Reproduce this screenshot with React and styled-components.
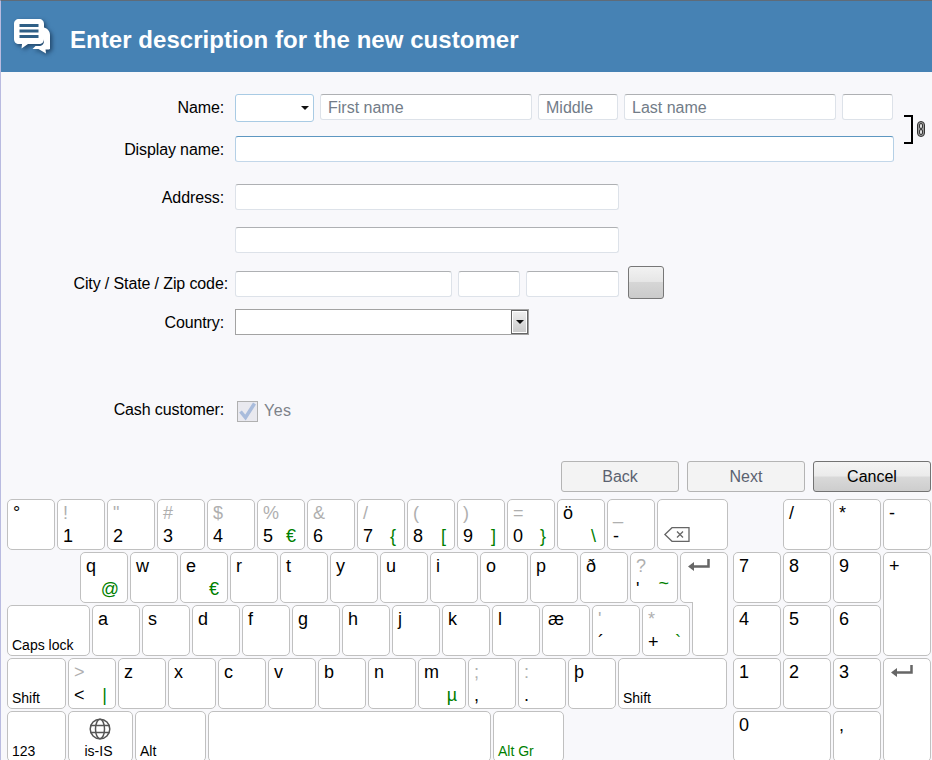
import React from 'react'
import styled, { createGlobalStyle } from 'styled-components'

const GlobalStyle = createGlobalStyle`
  html, body {
    margin: 0;
    padding: 0;
    background: #f8f8fb;
    font-family: "Liberation Sans", Arial, sans-serif;
  }
`

const Page = styled.div`
  width: 932px;
  height: 760px;
  box-sizing: border-box;
  overflow: hidden;
  border-top: 1px solid #5f6b78;
  border-left: 1px solid #b9bbe0;
  background: #f8f8fb;
`
const Header = styled.header`
  height: 71px;
  display: flex;
  align-items: center;
  padding-left: 13px;
  background: #4682b4;
`
const Title = styled.h1`
  margin: 7px 0 0 19px;
  font-size: 24px;
  font-weight: 700;
  letter-spacing: 0.05px;
  color: #fff;
`
const Form = styled.div`
  padding-top: 22px;
`
const NameGroup = styled.div`
  display: flex;
  align-items: center;
`
const NameRows = styled.div`
  width: 893px;
`
const Row = styled.div`
  display: flex;
  align-items: flex-start;
  margin-top: ${p => p.$top || 0}px;
`
const Label = styled.label`
  width: 234px;
  box-sizing: border-box;
  padding-right: ${p => p.$pad ?? 11}px;
  line-height: ${p => p.$line || 26}px;
  font-size: 16px;
  letter-spacing: -0.12px;
  text-align: right;
  color: #000;
  white-space: nowrap;
`
const Fields = styled.div`
  display: flex;
  gap: 6px;
`
const Input = styled.input`
  width: ${p => p.$w}px;
  height: 26px;
  box-sizing: border-box;
  padding: 1px 7px 0;
  border: 1px solid #dde2e9;
  border-top-color: ${p => (p.$active ? '#5d97c1' : '#aeb0b3')};
  border-radius: 3px;
  background: #fff;
  font: 16px "Liberation Sans", Arial, sans-serif;
  outline: none;
  ${p => p.$active && 'border-left-color:#b5d0e6;border-right-color:#b5d0e6;border-bottom-color:#c3d7e9;'}
  &::placeholder {
    color: #727c88;
    opacity: 1;
  }
`
const TitleSelect = styled.div`
  width: 79px;
  height: 28px;
  box-sizing: border-box;
  display: flex;
  align-items: center;
  justify-content: flex-end;
  padding-right: 4px;
  border: 1px solid #a9cbe4;
  border-radius: 3px;
  background: #fff;
`
const Caret = styled.span`
  width: 0;
  height: 0;
  border-left: 4px solid transparent;
  border-right: 4px solid transparent;
  border-top: 4px solid #111;
`
const LinkMark = styled.div`
  display: flex;
  align-items: center;
  gap: 4px;
  margin-left: 10px;
`
const Bracket = styled.span`
  width: 7px;
  height: 25px;
  border: 2px solid #000;
  border-left: none;
`
const LookupButton = styled.div`
  width: 36px;
  height: 33px;
  box-sizing: border-box;
  margin: -5px 0 0 9px;
  border: 1px solid #777;
  border-radius: 3px;
  background: linear-gradient(#f2f2f2 0, #e6e6e6 48%, #d6d6d6 50%, #cbcbcb 100%);
`
const CountrySelect = styled.div`
  width: 294px;
  height: 26px;
  box-sizing: border-box;
  display: flex;
  justify-content: flex-end;
  border: 1px solid #a3a3a3;
  background: #fff;
`
const CountryArrow = styled.span`
  width: 17px;
  box-sizing: border-box;
  display: flex;
  justify-content: center;
  padding-top: 9px;
  border: 1px solid #666;
  box-shadow: inset 0 0 0 1px #fff;
  background: linear-gradient(#f0f0f0, #c9c9c9);
`
const CheckRow = styled.div`
  display: flex;
  align-items: center;
  gap: 6px;
  margin: 1px 0 0 2px;
  height: 26px;
  font-size: 16px;
  letter-spacing: 0.5px;
  color: #7d8289;
`
const CheckBox = styled.span`
  width: 21px;
  height: 21px;
  box-sizing: border-box;
  display: flex;
  align-items: center;
  justify-content: center;
  border: 1px solid #b0b0b0;
  background: #e9e9ef;
`
const Actions = styled.div`
  display: flex;
  justify-content: flex-end;
  gap: 8px;
  margin-top: 37px;
  padding-right: 1px;
`
const ActionButton = styled.div`
  width: 118px;
  height: 31px;
  box-sizing: border-box;
  display: flex;
  align-items: center;
  justify-content: center;
  border: 1px solid ${p => (p.$primary ? '#737373' : '#b4b4b4')};
  border-radius: 3px;
  font-size: 16px;
  color: ${p => (p.$primary ? '#000' : '#5b6270')};
  background: ${p => (p.$primary
    ? 'linear-gradient(#f4f4f4 0, #ebebeb 48%, #d9d9d9 52%, #cdcdcd 100%)'
    : '#f3f3f3')};
`
const Keyboard = styled.div`
  display: flex;
  gap: 5px;
  margin: 7px 0 0 6px;
`
const MainKeys = styled.div`
  width: 721px;
  display: flex;
  flex-direction: column;
  gap: 2px;
`
const KeyRow = styled.div`
  display: flex;
  gap: 2px;
  height: 51px;
  padding-left: ${p => p.$indent || 0}px;
`
const NumPad = styled.div`
  display: grid;
  grid-template-columns: repeat(4, 48px);
  grid-auto-rows: 51px;
  gap: 2px;
`
const Key = styled.div`
  flex: none;
  width: ${p => (p.$w ? `${p.$w}px` : 'auto')};
  height: 100%;
  box-sizing: border-box;
  display: grid;
  grid-template-columns: 1fr auto;
  grid-template-rows: 23px 1fr;
  padding: 1px 8px 0 5px;
  border: 1px solid #c0c0c0;
  border-radius: 5px;
  background: #fff;
  font-size: 18px;
  line-height: 24px;
  color: #000;
  grid-column: ${p => (p.$col ? `${p.$col} / span ${p.$cols || 1}` : `span ${p.$cols || 1}`)};
  grid-row: span ${p => p.$rows || 1};
`
const EnterTop = styled(Key)`
  border-bottom-right-radius: 0;
`
const EnterBottom = styled(Key)`
  position: relative;
  height: 54px;
  margin-top: -3px;
  border-top: none;
  border-top-left-radius: 0;
  border-top-right-radius: 0;
`
const UpperChar = styled.span`
  grid-column: 1;
  grid-row: 1;
  color: #afafaf;
`
const MainChar = styled.span`
  grid-column: 1;
  grid-row: ${p => (p.$low ? 2 : 1)};
`
const AltChar = styled.span`
  grid-column: 2;
  grid-row: 2;
  margin-top: ${p => p.$lift || 0}px;
  color: #008000;
`
const WordLabel = styled.span`
  grid-column: 1 / span 2;
  grid-row: 2;
  align-self: end;
  margin-left: -1px;
  font-size: 14px;
  line-height: 20px;
  color: ${p => p.$color || '#000'};
  text-align: ${p => (p.$center ? 'center' : 'left')};
`
const IconSlot = styled.span`
  grid-column: 1 / span 2;
  grid-row: ${p => p.$row || 1};
  display: flex;
  justify-content: ${p => (p.$center ? 'center' : 'flex-start')};
  padding: ${p => p.$pad || '0'};
`
const Svg = styled.svg`
  display: block;
  overflow: visible;
`
const ChatSvg = styled(Svg)`
  filter: drop-shadow(2px 2px 2px rgba(20, 50, 80, 0.75));
`

const ChatIcon = () => (
  <ChatSvg width="37" height="35" viewBox="0 0 37 35">
    <path d="M30 8.5c3.5 1 6 3.5 6 7.5v14c-1 .6-2.500.6-4.500.5l.5 4-7.500-4.500h-6l3-3h3.500c3 0 5-2 5-5z" fill="#fff" />
    <path d="M5 0h20c3 0 5 2 5 5v15c0 3-2 5-5 5H14l-6.500 4.500 .5-4.500H5c-3 0-5-2-5-5V5c0-3 2-5 5-5z" fill="#fff" />
    <path d="M5.500 6.500h19M5.500 12h19M5.500 17.500h19" stroke="#2f5f86" strokeWidth="3" />
  </ChatSvg>
)
const ChainIcon = () => (
  <Svg width="8" height="16" viewBox="0 0 8 16" fill="none">
    <rect x="0.500" y="0.500" width="7" height="15" rx="3.500" fill="#999" stroke="#333" />
    <rect x="2.500" y="2.500" width="3" height="5" rx="1.500" fill="#ddd" stroke="#333" />
    <rect x="2.500" y="8.500" width="3" height="5" rx="1.500" fill="#ddd" stroke="#333" />
  </Svg>
)
const CheckMark = () => (
  <Svg width="19" height="18" viewBox="0 0 19 18" fill="none">
    <path d="M2.500 9.500l5 6L16.500 1.500" stroke="#a9bcdc" strokeWidth="3.500" />
  </Svg>
)
const EnterIcon = () => (
  <Svg width="22" height="12" viewBox="0 0 22 12" fill="none">
    <path d="M20.500 0v7.500H5" stroke="#666" strokeWidth="2.500" />
    <path d="M0 7.500l6-4.500v9z" fill="#666" />
  </Svg>
)
const BackspaceIcon = () => (
  <Svg width="26" height="15" viewBox="0 0 26 15" fill="none">
    <path d="M25 .7H8L.9 7.500 8 14.300h17z" stroke="#666" strokeWidth="1.300" />
    <path d="M13 4.500l6 6M19 4.500l-6 6" stroke="#666" strokeWidth="1.300" />
  </Svg>
)
const GlobeIcon = () => (
  <Svg width="22" height="22" viewBox="0 0 22 22" fill="none" stroke="#555" strokeWidth="1.500">
    <circle cx="11" cy="11" r="9.800" />
    <ellipse cx="11" cy="11" rx="4.500" ry="9.800" />
    <path d="M1.500 7.500h19M1.500 14.500h19" />
  </Svg>
)

const row1 = [
  { main: '°' },
  { up: '!', low: '1' }, { up: '"', low: '2' }, { up: '#', low: '3' }, { up: '$', low: '4' },
  { up: '%', low: '5', alt: '€' }, { up: '&', low: '6' }, { up: '/', low: '7', alt: '{' },
  { up: '(', low: '8', alt: '[' }, { up: ')', low: '9', alt: ']' }, { up: '=', low: '0', alt: '}' },
  { main: 'ö', alt: '\\' }, { up: '_', low: '-' },
]
const row2 = [
  { main: 'q', alt: '@' }, { main: 'w' }, { main: 'e', alt: '€' }, { main: 'r' }, { main: 't' },
  { main: 'y' }, { main: 'u' }, { main: 'i' }, { main: 'o' }, { main: 'p' }, { main: 'ð' },
  { up: '?', low: "'", alt: '~', lift: -6 },
]
const row3 = [
  { main: 'a' }, { main: 's' }, { main: 'd' }, { main: 'f' }, { main: 'g' }, { main: 'h' },
  { main: 'j' }, { main: 'k' }, { main: 'l' }, { main: 'æ' },
  { up: "'", low: '´' }, { up: '*', low: '+', alt: '`' },
]
const row4 = [
  { up: '>', low: '<', alt: '|' },
  { main: 'z' }, { main: 'x' }, { main: 'c' }, { main: 'v' }, { main: 'b' }, { main: 'n' },
  { main: 'm', alt: 'µ' }, { up: ';', low: ',' }, { up: ':', low: '.' }, { main: 'þ' },
]

const CharKey = ({ k }) => (
  <Key $w={48}>
    {k.up && <UpperChar>{k.up}</UpperChar>}
    {k.main && <MainChar>{k.main}</MainChar>}
    {k.low && <MainChar $low>{k.low}</MainChar>}
    {k.alt && <AltChar $lift={k.lift}>{k.alt}</AltChar>}
  </Key>
)

const App = () => {
  return (
    <Page>
      <GlobalStyle />
      <Header>
        <ChatIcon />
        <Title>Enter description for the new customer</Title>
      </Header>
      <Form>
        <NameGroup>
          <NameRows>
            <Row>
              <Label $line={28}>Name:</Label>
              <Fields>
                <TitleSelect><Caret /></TitleSelect>
                <Input $w={212} placeholder="First name" />
                <Input $w={80} placeholder="Middle" />
                <Input $w={212} placeholder="Last name" />
                <Input $w={51} />
              </Fields>
            </Row>
            <Row $top={14}>
              <Label $line={28}>Display name:</Label>
              <Input $w={659} $active />
            </Row>
          </NameRows>
          <LinkMark>
            <Bracket />
            <ChainIcon />
          </LinkMark>
        </NameGroup>
        <Row $top={20}>
          <Label $line={28}>Address:</Label>
          <Input $w={384} />
        </Row>
        <Row $top={15}>
          <Label />
          <Input $w={384} />
        </Row>
        <Row $top={18}>
          <Label $pad={7}>City / State / Zip code:</Label>
          <Fields>
            <Input $w={217} />
            <Input $w={62} />
            <Input $w={93} />
          </Fields>
          <LookupButton />
        </Row>
        <Row $top={10}>
          <Label $line={28}>Country:</Label>
          <CountrySelect>
            <CountryArrow><Caret /></CountryArrow>
          </CountrySelect>
        </Row>
        <Row $top={60}>
          <Label>Cash customer:</Label>
          <CheckRow>
            <CheckBox><CheckMark /></CheckBox>
            Yes
          </CheckRow>
        </Row>
        <Actions>
          <ActionButton>Back</ActionButton>
          <ActionButton>Next</ActionButton>
          <ActionButton $primary>Cancel</ActionButton>
        </Actions>
      </Form>
      <Keyboard>
        <MainKeys>
          <KeyRow>
            {row1.map((k, i) => <CharKey key={i} k={k} />)}
            <Key $w={71}>
              <IconSlot $row={2} $pad="3px 0 0 1px"><BackspaceIcon /></IconSlot>
            </Key>
          </KeyRow>
          <KeyRow $indent={73}>
            {row2.map((k, i) => <CharKey key={i} k={k} />)}
            <EnterTop $w={48}>
              <IconSlot $pad="5px 0 0 2px"><EnterIcon /></IconSlot>
            </EnterTop>
          </KeyRow>
          <KeyRow>
            <Key $w={83}><WordLabel>Caps lock</WordLabel></Key>
            {row3.map((k, i) => <CharKey key={i} k={k} />)}
            <EnterBottom $w={36} />
          </KeyRow>
          <KeyRow>
            <Key $w={59}><WordLabel>Shift</WordLabel></Key>
            {row4.map((k, i) => <CharKey key={i} k={k} />)}
            <Key $w={109}><WordLabel>Shift</WordLabel></Key>
          </KeyRow>
          <KeyRow>
            <Key $w={59}><WordLabel>123</WordLabel></Key>
            <Key $w={65}>
              <IconSlot $center $pad="5px 0 0 2px"><GlobeIcon /></IconSlot>
              <WordLabel $center>is-IS</WordLabel>
            </Key>
            <Key $w={71}><WordLabel>Alt</WordLabel></Key>
            <Key $w={283} />
            <Key $w={71}><WordLabel $color="#008000">Alt Gr</WordLabel></Key>
          </KeyRow>
        </MainKeys>
        <NumPad>
          <Key $col={2}><MainChar>/</MainChar></Key>
          <Key><MainChar>*</MainChar></Key>
          <Key><MainChar>-</MainChar></Key>
          <Key><MainChar>7</MainChar></Key>
          <Key><MainChar>8</MainChar></Key>
          <Key><MainChar>9</MainChar></Key>
          <Key $rows={2}><MainChar>+</MainChar></Key>
          <Key><MainChar>4</MainChar></Key>
          <Key><MainChar>5</MainChar></Key>
          <Key><MainChar>6</MainChar></Key>
          <Key><MainChar>1</MainChar></Key>
          <Key><MainChar>2</MainChar></Key>
          <Key><MainChar>3</MainChar></Key>
          <Key $rows={2}>
            <IconSlot $pad="5px 0 0 2px"><EnterIcon /></IconSlot>
          </Key>
          <Key $cols={2}><MainChar>0</MainChar></Key>
          <Key><MainChar>,</MainChar></Key>
        </NumPad>
      </Keyboard>
    </Page>
  )
}

export default App
